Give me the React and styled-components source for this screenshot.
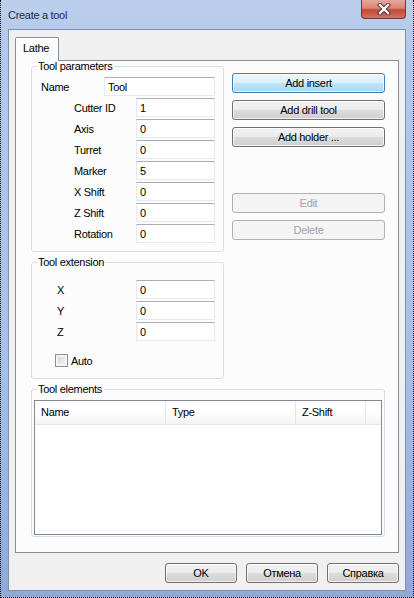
import React from "react";
import styled, { createGlobalStyle } from "styled-components";

const GlobalStyle = createGlobalStyle`
  body {
    margin: 0;
    background: #ffffff;
    font-family: "Liberation Sans", Arial, sans-serif;
    font-size: 11px;
    letter-spacing: -0.3px;
    color: #000;
  }
`;

// Window frame
const Window = styled.div`
  width: 414px;
  height: 598px;
  box-sizing: border-box;
  border-left: 1px dotted #111;
  border-right: 1px dotted #111;
  border-bottom: 1px dotted #111;
  background: linear-gradient(180deg, #bcd0ec 0%, #b3c9e9 8%, #a9c0e6 60%, #8fa9dc 100%);
  display: flex;
  flex-direction: column;
`;

const TitleBar = styled.div`
  height: 29px;
  display: flex;
  justify-content: space-between;
  align-items: flex-start;
`;

const Title = styled.div`
  padding: 9px 0 0 7px;
  font-size: 11px;
  color: #1c2d44;
`;

const CloseButton = styled.div`
  width: 45px;
  height: 19px;
  margin-right: 7px;
  box-sizing: border-box;
  border: 1px solid #6b3a36;
  border-top: none;
  border-radius: 0 0 4px 4px;
  background: linear-gradient(180deg, #e8a89d 0%, #d98477 45%, #c44a3a 55%, #d2705f 100%);
  display: flex;
  align-items: center;
  justify-content: center;
`;

// Client area
const Client = styled.div`
  flex: 1;
  margin: 0 7px 6px 7px;
  border: 1px solid #7b8fb0;
  background: #f0f0f0;
  padding: 7px 6px 7px 6px;
  display: flex;
  flex-direction: column;
`;

const TabStrip = styled.div`
  display: flex;
  height: 23px;
`;

const Tab = styled.div`
  position: relative;
  z-index: 1;
  height: 24px;
  box-sizing: border-box;
  padding: 4px 9px 0 7px;
  border: 1px solid #898c95;
  border-bottom: none;
  background: #fcfcfc;
  border-radius: 2px 2px 0 0;
`;

const Panel = styled.div`
  flex: 1;
  border: 1px solid #898c95;
  background: #fcfcfc;
  padding: 0 12px 0 15px;
  display: grid;
  grid-template-columns: 193px 153px;
  grid-template-rows: auto auto auto;
  column-gap: 8px;
  align-content: start;
`;

const Group = styled.fieldset`
  margin: 0;
  min-width: 0;
  border: 1px solid #d5dfe5;
  border-radius: 3px;
  padding: ${(p) => p.$pad};
  margin-top: ${(p) => p.$top || 0}px;
  grid-column: ${(p) => (p.$wide ? "1 / 3" : "1")};
`;

const Legend = styled.legend`
  padding: 0 2px 0 1px;
  margin-left: 3px;
  line-height: 11px;
  font-size: 11px;
`;

const Row = styled.div`
  display: flex;
  align-items: center;
  justify-content: space-between;
  height: 19px;
  margin-top: ${(p) => (p.$first ? 0 : 2)}px;
`;

const Label = styled.span`
  padding-left: ${(p) => p.$indent}px;
`;

const Field = styled.div`
  width: ${(p) => p.$width}px;
  height: 19px;
  box-sizing: border-box;
  border: 1px solid #e3e9ef;
  border-top-color: #abadb3;
  background: #fff;
  padding: 2px 0 0 3px;
  line-height: 14px;
`;

const ButtonColumn = styled.div`
  display: flex;
  flex-direction: column;
  gap: 7px;
  padding-top: 12px;
`;

const Button = styled.div`
  height: 20px;
  width: ${(p) => (p.$width ? `${p.$width}px` : "auto")};
  box-sizing: border-box;
  border: 1px solid ${(p) => (p.$default ? "#3c7fb1" : p.$disabled ? "#adb2b5" : "#707070")};
  border-radius: 3px;
  margin-top: ${(p) => p.$gap || 0}px;
  display: flex;
  align-items: center;
  justify-content: center;
  color: ${(p) => (p.$disabled ? "#a3a3a3" : "#000")};
  background: ${(p) =>
    p.$default
      ? "linear-gradient(180deg, #eaf6fd 0%, #d9f0fc 50%, #bee6fd 50%, #a7d9f5 100%)"
      : p.$disabled
      ? "#f4f4f4"
      : "linear-gradient(180deg, #f2f2f2 0%, #ebebeb 50%, #dddddd 50%, #cfcfcf 100%)"};
  box-shadow: inset 0 0 0 1px ${(p) => (p.$disabled ? "transparent" : "rgba(255,255,255,0.7)")};
`;

const CheckRow = styled.div`
  display: flex;
  align-items: center;
  gap: 3px;
  margin-top: 13px;
  padding-left: 21px;
  height: 13px;
`;

const CheckBox = styled.span`
  width: 13px;
  height: 13px;
  box-sizing: border-box;
  border: 1px solid #8e8f8f;
  background: linear-gradient(135deg, #cbcfd5 0%, #e8e9ea 60%, #f4f4f4 100%);
  box-shadow: inset 0 0 0 2px #f4f4f4;
`;

const ListBox = styled.div`
  height: 135px;
  box-sizing: border-box;
  border: 1px solid #828790;
  background: #fff;
`;

const ListHeader = styled.div`
  display: flex;
  height: 23px;
  border-bottom: 1px solid #e5e5e5;
  background: linear-gradient(180deg, #ffffff 0%, #ffffff 40%, #f3f4f6 100%);
`;

const HeaderCell = styled.div`
  width: ${(p) => (p.$width ? `${p.$width}px` : "auto")};
  flex: ${(p) => (p.$width ? "none" : 1)};
  border-right: ${(p) => (p.$width ? "1px solid #e3e5e8" : "none")};
  padding: 5px 0 0 6px;
  box-sizing: border-box;
`;

const Footer = styled.div`
  display: flex;
  justify-content: flex-end;
  gap: 9px;
  margin-top: 10px;
`;

const CloseIcon = () => (
  <svg width="14" height="12" viewBox="0 0 14 12">
    <path d="M3 2 L11 10 M11 2 L3 10" stroke="#4a2a28" strokeWidth="4.2" strokeLinecap="square" />
    <path d="M3 2 L11 10 M11 2 L3 10" stroke="#ffffff" strokeWidth="2.4" strokeLinecap="square" />
  </svg>
);

const params = [
  ["Cutter ID", "1"],
  ["Axis", "0"],
  ["Turret", "0"],
  ["Marker", "5"],
  ["X Shift", "0"],
  ["Z Shift", "0"],
  ["Rotation", "0"],
];

const App = () => {
  return (
    <>
      <GlobalStyle />
      <Window>
        <TitleBar>
          <Title>Create a tool</Title>
          <CloseButton>
            <CloseIcon />
          </CloseButton>
        </TitleBar>
        <Client>
          <TabStrip>
            <Tab>Lathe</Tab>
          </TabStrip>
          <Panel>
            {/* Tool parameters */}
            <Group $pad="5px 8px 8px 2px">
              <Legend>Tool parameters</Legend>
              <Row $first>
                <Label $indent={7}>Name</Label>
                <Field $width={111}>Tool</Field>
              </Row>
              {params.map(([name, value]) => (
                <Row key={name}>
                  <Label $indent={40}>{name}</Label>
                  <Field $width={79}>{value}</Field>
                </Row>
              ))}
            </Group>

            <ButtonColumn>
              <Button $default>Add insert</Button>
              <Button>Add drill tool</Button>
              <Button>Add holder ...</Button>
              <Button $disabled $gap={39}>Edit</Button>
              <Button $disabled>Delete</Button>
            </ButtonColumn>

            {/* Tool extension */}
            <Group $pad="12px 8px 11px 2px" $top={5}>
              <Legend>Tool extension</Legend>
              {["X", "Y", "Z"].map((axis, i) => (
                <Row key={axis} $first={i === 0}>
                  <Label $indent={23}>{axis}</Label>
                  <Field $width={79}>0</Field>
                </Row>
              ))}
              <CheckRow>
                <CheckBox />
                <span>Auto</span>
              </CheckRow>
            </Group>

            {/* Tool elements */}
            <Group $pad="5px 2px 1px 2px" $top={5} $wide>
              <Legend>Tool elements</Legend>
              <ListBox>
                <ListHeader>
                  <HeaderCell $width={131}>Name</HeaderCell>
                  <HeaderCell $width={130}>Type</HeaderCell>
                  <HeaderCell $width={70}>Z-Shift</HeaderCell>
                  <HeaderCell />
                </ListHeader>
              </ListBox>
            </Group>
          </Panel>
          <Footer>
            <Button $width={72}>OK</Button>
            <Button $width={72}>Отмена</Button>
            <Button $width={72}>Справка</Button>
          </Footer>
        </Client>
      </Window>
    </>
  );
};

export default App;
